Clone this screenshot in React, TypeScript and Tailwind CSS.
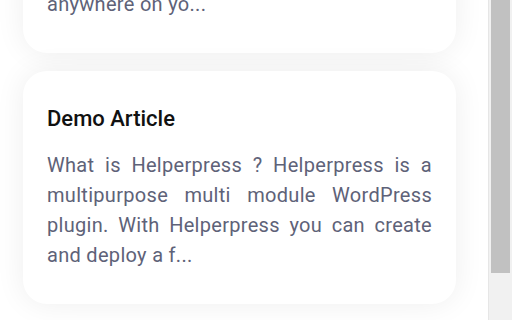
export default function App() {
  return (
    <div className="flex h-[320px] w-[512px] overflow-hidden bg-white" style={{ fontFamily: "Roboto, sans-serif" }}>
      {/* scrolled list, pinned to the bottom */}
      <div className="flex h-full w-[488px] flex-col justify-end gap-[18px] overflow-hidden pb-4 pl-[23px] pr-[32px]">
        <div className="shrink-0 rounded-3xl bg-white px-6 pb-[34px] pt-[34px] shadow-[0_0_30px_rgba(0,0,0,0.07)]">
          <h3 className="mb-[17px] text-[22px] font-medium leading-7 text-[#111]">Getting Started</h3>
          <p className="text-justify text-[20px] leading-[30px] tracking-[0.3px] text-[#5e6278]">
            Add a floating help widget to your site so visitors can search the knowledge base from
            <br />
            anywhere on yo...
          </p>
        </div>
        <div className="shrink-0 rounded-3xl bg-white px-6 pb-[34px] pt-[34px] shadow-[0_0_30px_rgba(0,0,0,0.07)]">
          <h3 className="mb-[17px] text-[22px] font-medium leading-7 text-[#111]">Demo Article</h3>
          <p className="text-justify text-[20px] leading-[30px] tracking-[0.3px] text-[#5e6278]">
            What is Helperpress ? Helperpress is a multipurpose multi module WordPress plugin. With Helperpress you can create and deploy a f...
          </p>
        </div>
      </div>

      {/* scrollbar */}
      <div className="flex h-full w-6 flex-col border-l border-[#e6e6e6] bg-[#f1f1f1] px-[2px]">
        <div className="h-[273px] w-full bg-[#c1c1c1]" />
      </div>
    </div>
  )
}
